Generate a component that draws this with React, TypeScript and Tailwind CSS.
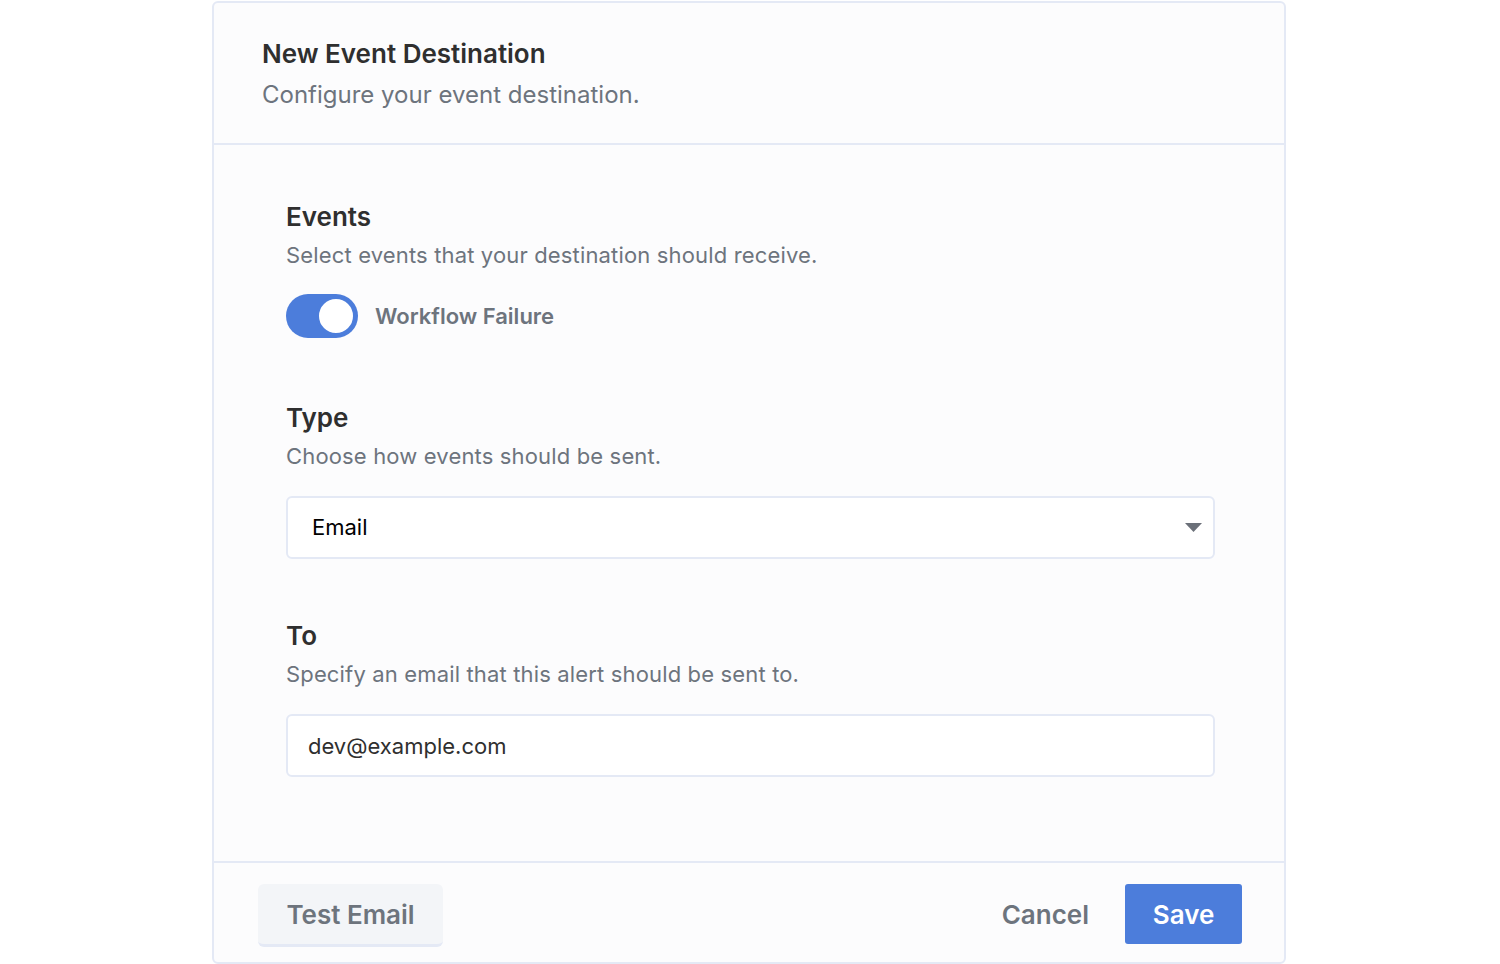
import { useState } from 'react'

const Toggle = ({ on, onChange }: { on: boolean; onChange: (v: boolean) => void }) => {
  return (
    <button
      type="button"
      onClick={() => onChange(!on)}
      className={`relative h-[44px] w-[72px] rounded-full transition-colors ${on ? 'bg-[#4c7ddb]' : 'bg-[#d5dbe6]'}`}
    >
      <span
        className={`absolute top-[2px] h-[40px] w-[40px] rounded-full border-[3px] border-[#4c7ddb] bg-white transition-all ${on ? 'left-[30px]' : 'left-[2px]'}`}
      />
    </button>
  )
}

const App = () => {
  const [enabled, setEnabled] = useState<boolean>(true)
  const [type, setType] = useState<string>('Email')
  const [email, setEmail] = useState<string>('dev@example.com')

  return (
    <div className="min-h-screen bg-white font-['Inter',sans-serif]">
      <div className="mt-px ml-[212px] flex h-[963px] w-[1074px] flex-col rounded-md border-2 border-[#e4e9f5] bg-[#fcfcfd]">
        <div className="border-b-2 border-[#e4e9f5] px-[48px] pt-[35px] pb-[32px]">
          <h1 className="text-[26px] leading-8 font-semibold text-[#2f2f2f]">New Event Destination</h1>
          <p className="mt-[9px] text-[24px] leading-8 text-[#6d747d]">Configure your event destination.</p>
        </div>

        <div className="flex-1 pt-[56px] pr-[69px] pl-[72px]">
          <h2 className="text-[26px] leading-8 font-semibold text-[#2f2f2f]">Events</h2>
          <p className="mt-[8px] text-[22px] leading-7 tracking-[0.007em] text-[#6d747d]">Select events that your destination should receive.</p>
          <div className="mt-[25px] flex items-center gap-[17px]">
            <Toggle on={enabled} onChange={setEnabled} />
            <span className="text-[22px] leading-7 font-semibold text-[#6d747d]">Workflow Failure</span>
          </div>

          <h2 className="mt-[64px] text-[26px] leading-8 font-semibold text-[#2f2f2f]">Type</h2>
          <p className="mt-[8px] text-[22px] leading-7 tracking-[0.007em] text-[#6d747d]">Choose how events should be sent.</p>
          <div className="relative mt-[26px]">
            <select
              value={type}
              onChange={(e) => setType(e.target.value)}
              className="h-[63px] w-full appearance-none rounded-md border-2 border-[#e4e9f5] bg-white px-[24px] text-[22px] text-black outline-none"
            >
              <option>Email</option>
              <option>Webhook</option>
              <option>Slack</option>
            </select>
            <svg className="pointer-events-none absolute top-[27px] right-[13px]" width="17" height="10" viewBox="0 0 17 10">
              <path d="M0 0 H17 L8.5 9 Z" fill="#6b7079" />
            </svg>
          </div>

          <h2 className="mt-[61px] text-[26px] leading-8 font-semibold text-[#2f2f2f]">To</h2>
          <p className="mt-[8px] text-[22px] leading-7 tracking-[0.007em] text-[#6d747d]">Specify an email that this alert should be sent to.</p>
          <input
            type="text"
            value={email}
            onChange={(e) => setEmail(e.target.value)}
            className="mt-[26px] h-[63px] w-full rounded-md border-2 border-[#e4e9f5] bg-white px-[20px] text-[22px] text-[#2f2f2f] outline-none"
          />
        </div>

        <div className="flex h-[101px] items-start justify-between border-t-2 border-[#e4e9f5] pt-[21px] pr-[42px] pl-[44px]">
          <button className="h-[63px] w-[185px] rounded-md border-b-[3px] border-[#e4e9f5] bg-[#f3f5f8] text-[26px] font-semibold text-[#6d747d]">
            Test Email
          </button>
          <div className="flex items-center gap-[36px]">
            <button className="text-[26px] font-semibold text-[#6d747d]">Cancel</button>
            <button className="h-[60px] w-[117px] rounded-[3px] bg-[#4c7ddb] text-[26px] font-semibold text-white">Save</button>
          </div>
        </div>
      </div>
    </div>
  )
}

export default App
